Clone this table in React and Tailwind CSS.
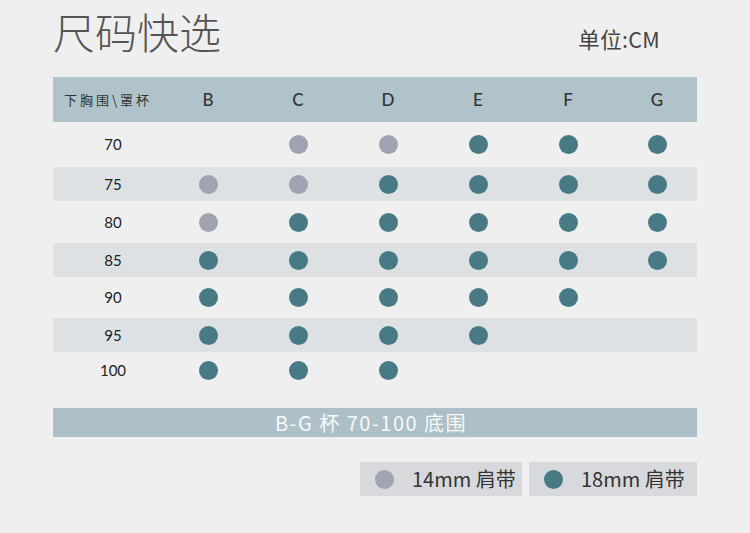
import React from "react";

const G = "gray";
const T = "teal";
const rows = [
  { label: "70", h: "h-[45px]", stripe: false, cells: [null, G, G, T, T, T] },
  { label: "75", h: "h-[34px]", stripe: true, cells: [G, G, T, T, T, T] },
  { label: "80", h: "h-[42px]", stripe: false, cells: [G, T, T, T, T, T] },
  { label: "85", h: "h-[34px]", stripe: true, cells: [T, T, T, T, T, T] },
  { label: "90", h: "h-[41px]", stripe: false, cells: [T, T, T, T, T, null] },
  { label: "95", h: "h-[34px]", stripe: true, cells: [T, T, T, T, null, null] },
  { label: "100", h: "h-[36px]", stripe: false, cells: [T, T, T, null, null, null] },
];

const cols = "grid grid-cols-[110px_90px_90px_90px_90px_90px_84px]";
const cjk = "font-['Noto_Sans_CJK_SC','Noto_Sans',sans-serif]";
const lato = "font-['Lato','Noto_Sans_CJK_SC',sans-serif]";

function Dot({ kind }) {
  if (!kind) return null;
  return (
    <span
      className={
        "block w-[19px] h-[19px] rounded-full " +
        (kind === G ? "bg-[#a0a4b1]" : "bg-[#487a86]")
      }
    />
  );
}

export default function App() {
  return (
    <div className="w-[750px] h-[533px] bg-[#efefef] overflow-hidden">
      <div className="pl-[53px] w-[697px]">
        <div className="flex items-end justify-between h-[77px] pb-[25px]">
          <h1 className={cjk + " text-[42px] leading-none font-light text-[#555555]"}>
            尺码快选
          </h1>
          <div className={cjk + " text-[21.5px] leading-none text-[#444444] mr-[37px] mb-[3px] tracking-[0.3px]"}>
            单位:CM
          </div>
        </div>

        <div className={cols + " h-[45px] bg-[#b1c3ca] items-center text-[#333333]"}>
          <div className={cjk + " text-[13px] tracking-[3px] pl-[11px]"}>下胸围\罩杯</div>
          {["B", "C", "D", "E", "F", "G"].map((c, i) => (
            <div key={c} className={lato + " text-[17px] font-medium text-center" + (i === 5 ? " pl-[4px]" : "")}>
              {c}
            </div>
          ))}
        </div>

        {rows.map((r) => (
          <div
            key={r.label}
            className={cols + " items-center " + r.h + (r.stripe ? " bg-[#dde1e4]" : "")}
          >
            <div className={lato + " text-[15px] text-[#222222] text-center pl-[10px]"}>{r.label}</div>
            {r.cells.map((k, i) => (
              <div key={i} className={"flex justify-center" + (i === 5 ? " pl-[4px]" : "")}>
                <Dot kind={k} />
              </div>
            ))}
          </div>
        ))}

        <div
          className={cjk + " mt-[20px] h-[29px] bg-[#aec0c7] flex items-center justify-center pr-[8px] text-[20px] text-[#f7f9fa] tracking-[1.5px]"}
        >
          B-G 杯 70-100 底围
        </div>

        <div className="mt-[25px] flex justify-end gap-[7px]">
          <div className="w-[162px] h-[34px] bg-[#d8d9dd] flex items-center pl-[15px]">
            <Dot kind={G} />
            <span className={cjk + " ml-[18px] text-[20px] leading-none text-[#333333]"}>14mm 肩带</span>
          </div>
          <div className="w-[168px] h-[34px] bg-[#d8d9dd] flex items-center pl-[15px]">
            <Dot kind={T} />
            <span className={cjk + " ml-[18px] text-[20px] leading-none text-[#333333]"}>18mm 肩带</span>
          </div>
        </div>
      </div>
    </div>
  );
}
